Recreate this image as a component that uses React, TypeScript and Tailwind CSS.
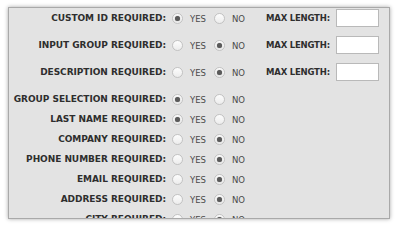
const rows: { label: string; yes: boolean; max?: boolean }[] = [
    { label: 'CUSTOM ID REQUIRED:', yes: true, max: true },
    { label: 'INPUT GROUP REQUIRED:', yes: false, max: true },
    { label: 'DESCRIPTION REQUIRED:', yes: false, max: true },
    { label: 'GROUP SELECTION REQUIRED:', yes: true },
    { label: 'LAST NAME REQUIRED:', yes: true },
    { label: 'COMPANY REQUIRED:', yes: false },
    { label: 'PHONE NUMBER REQUIRED:', yes: false },
    { label: 'EMAIL REQUIRED:', yes: false },
    { label: 'ADDRESS REQUIRED:', yes: false },
    { label: 'CITY REQUIRED:', yes: false },
];

function Radio({ checked }: { checked: boolean }) {
    return (
        <span className="flex h-[11px] w-[11px] shrink-0 items-center justify-center rounded-full border border-[#c2c2c2] bg-gradient-to-b from-[#fdfdfd] to-[#ececec]">
            {checked && <span className="h-[5px] w-[5px] rounded-full bg-[#5a5a5a] shadow-[0_0_1px_#777]" />}
        </span>
    );
}

export default function App() {
    return (
        <div className="h-[226px] w-[399px] overflow-hidden bg-white pl-[8px] pt-[7px]" style={{ fontFamily: '"DejaVu Sans", Verdana, sans-serif' }}>
            <div className="h-[212px] w-[382px] overflow-hidden border border-[#a9a9a9] bg-[#e3e3e3] shadow-[0_0_4px_rgba(0,0,0,0.35)]">
                {rows.map((r, i) => (
                    <div key={r.label} className={`flex h-[20px] items-center ${i < 3 ? 'mb-[7px]' : ''}`}>
                        <div className="w-[157px] pt-[1px] text-right text-[9px] font-bold tracking-[-0.05px] text-[#2e2e2e]">{r.label}</div>
                        <div className="flex w-[100px] items-center pl-[6px] text-[8.5px] text-[#4a4a4a]">
                            <Radio checked={r.yes} />
                            <span className="ml-[7px] mt-[2px]">YES</span>
                            <span className="ml-[8px]"><Radio checked={!r.yes} /></span>
                            <span className="ml-[7px] mt-[2px]">NO</span>
                        </div>
                        {r.max && (
                            <div className="flex items-center">
                                <span className="pt-[1px] text-[8.5px] font-bold tracking-[-0.2px] text-[#2e2e2e]">MAX LENGTH:</span>
                                <input
                                    type="text"
                                    className="ml-[6px] h-[18px] w-[43px] border border-[#b9b9b9] bg-white outline-none"
                                />
                            </div>
                        )}
                    </div>
                ))}
            </div>
        </div>
    );
}
